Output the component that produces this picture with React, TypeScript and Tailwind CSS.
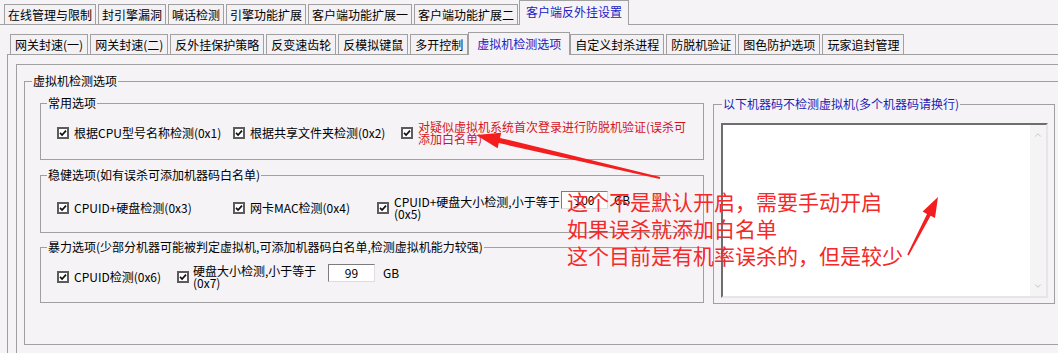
import { ChevronUp, ChevronDown } from 'lucide-react';

const topTabs = ['在线管理与限制', '封引擎漏洞', '喊话检测', '引擎功能扩展', '客户端功能扩展一', '客户端功能扩展二', '客户端反外挂设置'];
const subTabs = ['网关封速(一)', '网关封速(二)', '反外挂保护策略', '反变速齿轮', '反模拟键鼠', '多开控制', '虚拟机检测选项', '自定义封杀进程', '防脱机验证', '图色防护选项', '玩家追封管理'];

function Check() {
  return (
    <span className="flex h-[12px] w-[12px] shrink-0 items-center justify-center border-2 border-[#5c5c5c] bg-white">
      <svg width="8" height="8" viewBox="0 0 8 8">
        <path d="M1 3.8 L3.1 6 L7 1.6" fill="none" stroke="#111" strokeWidth="1.7" />
      </svg>
    </span>
  );
}

function NumBox({ value, w }: { value: string; w: string }) {
  return (
    <span className={`flex h-[18px] ${w} items-center justify-center border border-t-[#7c7c7c] border-l-[#7c7c7c] border-r-[#dedede] border-b-[#dedede] bg-white`}>
      {value}
    </span>
  );
}

export default function App() {
  return (
    <div className="relative h-[353px] w-[1058px] overflow-hidden bg-[#f5f3f6] font-['Noto_Sans_CJK_SC',sans-serif] text-[12px] leading-[14px] text-black">
      {/* 顶部标签 */}
      <div className="flex h-[24px] items-end gap-[2px] pl-[4px]">
        {topTabs.map((t) =>
          t === '客户端反外挂设置' ? (
            <div key={t} className="relative z-10 -mb-px -ml-[1px] flex h-[25px] items-center border border-b-0 border-[#a0a0a0] bg-[#f5f3f6] px-[6px] pb-[2px] text-[#2020c4]">
              {t}
            </div>
          ) : (
            <div key={t} className="flex h-[20px] items-center border border-b-0 border-[#a0a0a0] bg-[#f3f1f4] px-[3px]">
              {t}
            </div>
          )
        )}
      </div>

      <div className="border-t border-[#a0a0a0] pl-[7px]">
        {/* 子标签 */}
        <div className="flex h-[29px] items-end gap-[2px] pl-[3px]">
          {subTabs.map((t) =>
            t === '虚拟机检测选项' ? (
              <div key={t} className="relative z-10 -mx-[2px] -mb-px flex h-[23px] items-center border border-b-0 border-[#a0a0a0] bg-[#f5f3f6] px-[8px] pb-[1px] text-[#2020c4]">
                {t}
              </div>
            ) : (
              <div key={t} className="flex h-[20px] items-center border border-b-0 border-[#a0a0a0] bg-[#f3f1f4] px-[4px]">
                {t}
              </div>
            )
          )}
        </div>

        <div className="h-[300px] border-l border-t border-[#a0a0a0] pl-[8px] pt-[9px]">
          <div className="h-[300px] border-l border-t border-[#a0a0a0] pl-[7px] pt-[9px]">
            <fieldset className="w-[1100px] border border-[#a0a0a0] pb-[40px]">
              <legend className="ml-[7px] px-[1px] leading-[14px]">虚拟机检测选项</legend>
              <div className="flex items-start gap-[9px] pl-[15px]">
                <div className="flex w-[664px] flex-col">
                  <fieldset className="mt-[8px] border border-[#a0a0a0]">
                    <legend className="ml-[6px] px-[1px] leading-[14px]">常用选项</legend>
                    <div className="flex items-center pb-[14px] pl-[16px] pt-[11px]">
                      <div className="flex w-[176px] items-center">
                        <Check />
                        <span className="ml-[5px]">根据CPU型号名称检测(0x1)</span>
                      </div>
                      <div className="flex w-[168px] items-center">
                        <Check />
                        <span className="ml-[5px]">根据共享文件夹检测(0x2)</span>
                      </div>
                      <div className="flex items-center">
                        <Check />
                        <span className="ml-[5px] leading-[12px] text-[#d4141c]">
                          对疑似虚拟机系统首次登录进行防脱机验证(误杀可
                          <br />
                          添加白名单)
                        </span>
                      </div>
                    </div>
                  </fieldset>

                  <fieldset className="mt-[8px] border border-[#a0a0a0]">
                    <legend className="ml-[6px] px-[1px] leading-[14px]">稳健选项(如有误杀可添加机器码白名单)</legend>
                    <div className="flex items-center pb-[12px] pl-[16px] pt-[14px]">
                      <div className="flex w-[176px] items-center">
                        <Check />
                        <span className="ml-[5px]">CPUID+硬盘检测(0x3)</span>
                      </div>
                      <div className="flex w-[144px] items-center">
                        <Check />
                        <span className="ml-[5px]">网卡MAC检测(0x4)</span>
                      </div>
                      <div className="flex items-start">
                        <span className="mt-[6px]">
                          <Check />
                        </span>
                        <span className="ml-[5px] w-[167px] leading-[12px]">
                          CPUID+硬盘大小检测,小于等于
                          <br />
                          (0x5)
                        </span>
                        <div className="-mt-[5px] flex items-center">
                          <NumBox value="100" w="w-[47px]" />
                          <span className="ml-[6px]">GB</span>
                        </div>
                      </div>
                    </div>
                  </fieldset>

                  <fieldset className="mt-[7px] border border-[#a0a0a0]">
                    <legend className="ml-[6px] px-[1px] leading-[14px]">暴力选项(少部分机器可能被判定虚拟机,可添加机器码白名单,检测虚拟机能力较强)</legend>
                    <div className="flex items-center pb-[13px] pl-[16px] pt-[11px]">
                      <div className="flex w-[120px] items-center">
                        <Check />
                        <span className="ml-[5px]">CPUID检测(0x6)</span>
                      </div>
                      <div className="flex items-start">
                        <span className="mt-[6px]">
                          <Check />
                        </span>
                        <span className="ml-[4px] w-[135px] leading-[12px]">
                          硬盘大小检测,小于等于
                          <br />
                          (0x7)
                        </span>
                        <div className="-mt-[1px] flex items-center">
                          <NumBox value="99" w="w-[47px]" />
                          <span className="ml-[8px]">GB</span>
                        </div>
                      </div>
                    </div>
                  </fieldset>
                </div>

                <fieldset className="mt-[9px] w-[342px] border border-[#a0a0a0] pb-[5px] pl-[7px] pr-[6px] pt-[12px]">
                  <legend className="ml-[1px] px-[1px] leading-[14px] text-[#1c1cb4]">以下机器码不检测虚拟机(多个机器码请换行)</legend>
                  <div className="flex h-[175px] justify-end border-2 border-t-[#6e6e6e] border-l-[#6e6e6e] border-r-[#e6e6e6] border-b-[#e6e6e6] bg-white">
                    <div className="flex w-[16px] flex-col items-center justify-between bg-[#f4f4f4] py-[5px]">
                      <ChevronUp size={10} strokeWidth={2} color="#bcbcbc" />
                      <ChevronDown size={10} strokeWidth={2} color="#bcbcbc" />
                    </div>
                  </div>
                </fieldset>
              </div>
            </fieldset>
          </div>
        </div>
      </div>

      {/* 红色标注 */}
      <svg className="pointer-events-none absolute left-0 top-0" width="1058" height="353">
        <polygon points="476,135 501.2,132.7 500,137.9 660.2,177 659.8,179 498.8,143.1 497.6,148.3" fill="#f41e1e" />
        <polygon points="938,197 935,218 930.6,215.7 908.7,255.4 907.3,254.6 927,213.9 922.6,211.6" fill="#f41e1e" />
      </svg>
      <div className="pointer-events-none absolute left-[567px] top-[188px] text-[21px] leading-[27px] text-[#f42a2a]">
        <div>这个不是默认开启，需要手动开启</div>
        <div>如果误杀就添加白名单</div>
        <div>这个目前是有机率误杀的，但是较少</div>
      </div>
    </div>
  );
}
